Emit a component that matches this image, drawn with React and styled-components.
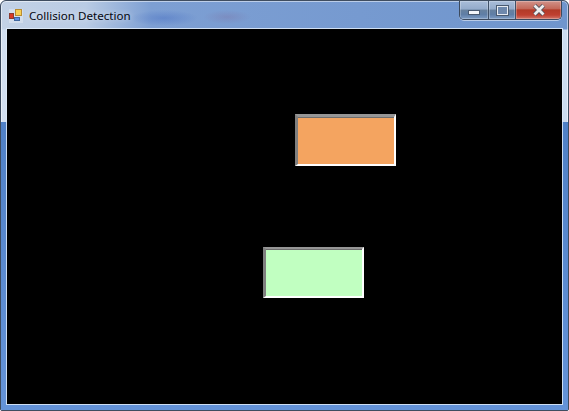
import React from 'react'
import styled, { createGlobalStyle } from 'styled-components'

const GlobalStyle = createGlobalStyle`
  html, body {
    margin: 0;
    padding: 0;
    background: #fff;
  }
  #root {
    width: 569px;
    height: 411px;
  }
`

const Window = styled.div`
  position: relative;
  box-sizing: border-box;
  width: 569px;
  height: 411px;
  display: flex;
  flex-direction: column;
  overflow: hidden;
  border: 1px solid #3f4d60;
  border-radius: 6px 6px 2px 2px;
  box-shadow: inset 0 0 0 1px rgba(255, 255, 255, 0.5);
  background:
    radial-gradient(ellipse 34px 8px at 163px 17px, rgba(60, 100, 190, 0.38), transparent),
    radial-gradient(ellipse 24px 7px at 226px 16px, rgba(125, 100, 150, 0.28), transparent),
    linear-gradient(180deg, rgba(255, 255, 255, 0) 0, rgba(255, 255, 255, 0) 28px, rgba(214, 227, 243, 0.9) 29px, rgba(214, 227, 243, 0.9) 121px, rgba(255, 255, 255, 0) 122px),
    linear-gradient(90deg, #c3d2e6 0, #b9cbe4 85px, #7d9fd3 150px, #6f95cd 100%);
  background-color: #5e8ad0;
`

const BottomGlass = styled.div`
  position: absolute;
  inset: 121px 0 0 0;
  z-index: 0;
  background: linear-gradient(180deg, #4f80c6 0, #5c8cd2 60%, #6493d8 100%);
`

const TitleBar = styled.div`
  position: relative;
  z-index: 1;
  flex: none;
  height: 27px;
  display: flex;
  align-items: flex-start;
  justify-content: space-between;
  padding-left: 8px;
  padding-right: 6px;
`

const Caption = styled.div`
  display: flex;
  align-items: center;
  gap: 6px;
  height: 15px;
  margin-top: 7px;
`

const AppIcon = styled.svg`
  flex: none;
  width: 14px;
  height: 15px;
`

const Title = styled.span`
  font-family: 'Noto Sans', sans-serif;
  font-size: 11.6px;
  line-height: 15px;
  color: #05070f;
  white-space: nowrap;
  text-shadow: 0 0 6px rgba(255, 255, 255, 0.7);
`

const Buttons = styled.div`
  display: flex;
  height: 19px;
  box-sizing: border-box;
  border: 1px solid #3c4a5e;
  border-top: 0;
  border-radius: 0 0 5px 5px;
  overflow: hidden;
  box-shadow: 0 1px 0 rgba(255, 255, 255, 0.5);
`

const CaptionButton = styled.div`
  width: ${(p) => p.$w}px;
  display: flex;
  align-items: center;
  justify-content: center;
  box-sizing: border-box;
  border-left: ${(p) => (p.$first ? '0' : '1px solid #3f5068')};
  box-shadow: inset 0 0 0 1px rgba(255, 255, 255, 0.25);
  background: ${(p) =>
    p.$close
      ? 'linear-gradient(180deg, #d1938a 0, #c4695a 42%, #b23a28 50%, #bf4030 78%, #d0766a 100%)'
      : 'linear-gradient(180deg, #a9bdd9 0, #94abcb 45%, #66819f 50%, #5f7ea6 75%, #7d9cc4 100%)'};
`

const MinGlyph = styled.div`
  width: 12px;
  height: 5px;
  margin-top: 5px;
  box-sizing: border-box;
  background: #f4f6f9;
  border: 1px solid #4a5a70;
`

const MaxGlyph = styled.div`
  width: 13px;
  height: 11px;
  box-sizing: border-box;
  background: #6e88ac;
  border: 2px solid #e6ebf2;
  outline: 1px solid #4a5a70;
  outline-offset: -1px;
`

const CloseGlyph = styled.svg`
  width: 14px;
  height: 12px;
`

const Body = styled.div`
  position: relative;
  z-index: 1;
  flex: 1;
  min-height: 0;
  display: flex;
  padding: 0 5px 5px;
`

const Client = styled.div`
  position: relative;
  flex: 1;
  background: #000;
  box-shadow: 0 0 0 1px rgba(225, 236, 249, 0.85);
  margin: 1px;
`

// panels sit on a free canvas, their spot is the content
const Panel = styled.div`
  position: absolute;
  left: ${(p) => p.$x}px;
  top: ${(p) => p.$y}px;
  box-sizing: border-box;
  width: 101px;
  height: ${(p) => p.$h}px;
  background: ${(p) => p.$color};
  border-style: solid;
  border-width: ${(p) => p.$top}px 2px 2px 3px;
  border-color: #969696 #fff #fff #7f7f7f;
  box-shadow: inset 0 1px 0 #6e6e6e;
`

const App = () => (
  <>
    <GlobalStyle />
    <Window>
      <BottomGlass />
      <TitleBar>
        <Caption>
          <AppIcon viewBox="0 0 14 15">
            <rect x="0" y="1" width="14" height="14" fill="#e6ebf3" opacity="0.5" />
            <rect x="6.5" y="1.5" width="6" height="6" fill="#f7cf52" stroke="#b98d33" />
            <rect x="0.5" y="5.5" width="4" height="5" fill="#d93a26" stroke="#8c3a30" />
            <rect x="5.5" y="9.5" width="5" height="3" fill="#5a8fe6" stroke="#41679f" />
          </AppIcon>
          <Title>Collision Detection</Title>
        </Caption>
        <Buttons>
          <CaptionButton $w={28} $first>
            <MinGlyph />
          </CaptionButton>
          <CaptionButton $w={27}>
            <MaxGlyph />
          </CaptionButton>
          <CaptionButton $w={46} $close>
            <CloseGlyph viewBox="0 0 14 12">
              <path d="M2.5 1.5 L11.5 10.5 M11.5 1.5 L2.5 10.5" stroke="#4d4f5a" strokeWidth="4.4" />
              <path d="M2.5 1.5 L11.5 10.5 M11.5 1.5 L2.5 10.5" stroke="#eeeeee" strokeWidth="2.8" />
            </CloseGlyph>
          </CaptionButton>
        </Buttons>
      </TitleBar>
      <Body>
        <Client>
          <Panel $x={288} $y={85} $h={52} $top={3} $color="#f4a460" />
          <Panel $x={256} $y={218} $h={51} $top={2} $color="#c1ffc1" />
        </Client>
      </Body>
    </Window>
  </>
)

export default App
